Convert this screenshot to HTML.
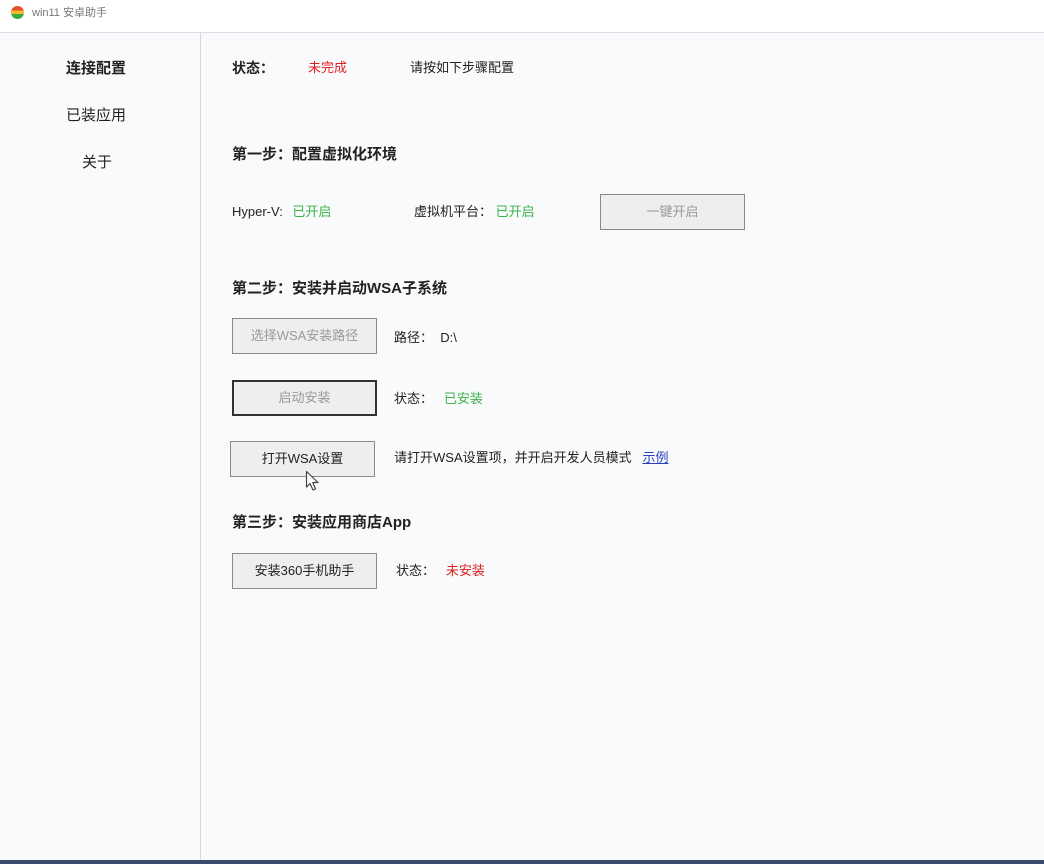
<!DOCTYPE html>
<html><head><meta charset="utf-8"><style>
body{margin:0;width:1044px;height:864px;background:#f9fafc;font-family:"Liberation Sans","Noto Sans CJK SC",sans-serif;font-size:14px;color:#222;position:relative;overflow:hidden}
.a{position:absolute;white-space:nowrap;line-height:16px}
.b{position:absolute;width:143px;height:34px;border:1px solid #8a8a8a;background:#eeeeef;text-align:center;line-height:34px;font-size:13px;color:#222}
.g{color:#3bb54a}.r{color:#e02020}.h{font-weight:bold;font-size:15px}
</style></head><body>
<div style="position:absolute;left:0;top:0;width:1044px;height:32px;background:#fff;border-bottom:1px solid #dcdde0"></div>
<div style="position:absolute;left:11px;top:6px;width:13px;height:13px;border-radius:50%;background:linear-gradient(#e84a2a 0 33%,#f5b82e 33% 60%,#3aa845 60%)"></div>
<div class="a" style="left:32px;top:5px;font-size:11px;color:#777">win11 安卓助手</div>
<div style="position:absolute;left:200px;top:33px;width:1px;height:831px;background:#d6d7da"></div>
<div style="position:absolute;left:0;top:860px;width:1044px;height:4px;background:#3a4a6a"></div>
<div class="a h" style="left:66px;top:61px">连接配置</div>
<div class="a" style="left:66px;top:108px;font-size:15px">已装应用</div>
<div class="a" style="left:82px;top:155px;font-size:15px">关于</div>
<div class="a h" style="left:232px;top:60px;font-size:14px">状态：</div>
<div class="a r" style="left:308px;top:60px;font-size:13px">未完成</div>
<div class="a" style="left:410px;top:60px;font-size:13px">请按如下步骤配置</div>
<div class="a h" style="left:232px;top:147px">第一步：配置虚拟化环境</div>
<div class="a" style="left:232px;top:204px;font-size:13px">Hyper-V: <span class="g" style="margin-left:6px">已开启</span></div>
<div class="a" style="left:414px;top:204px;font-size:13px">虚拟机平台： <span class="g">已开启</span></div>
<div class="b" style="left:600px;top:194px;color:#999">一键开启</div>
<div class="a h" style="left:232px;top:281px">第二步：安装并启动WSA子系统</div>
<div class="b" style="left:232px;top:318px;color:#999">选择WSA安装路径</div>
<div class="a" style="left:394px;top:330px;font-size:13px">路径：&nbsp;&nbsp;D:\</div>
<div class="b" style="left:232px;top:380px;border:2px solid #333;width:141px;height:32px;line-height:32px;color:#999">启动安装</div>
<div class="a" style="left:394px;top:391px;font-size:13px">状态：&nbsp;&nbsp;&nbsp;<span class="g">已安装</span></div>
<div class="b" style="left:230px;top:441px">打开WSA设置</div>
<div class="a" style="left:394px;top:450px;font-size:13px">请打开WSA设置项，并开启开发人员模式&nbsp;&nbsp;&nbsp;<span style="color:#2a3fbf;text-decoration:underline">示例</span></div>
<svg style="position:absolute;left:305px;top:470px" width="16" height="24" viewBox="0 0 16 24"><path d="M1.5 1.5 L1.5 17 L5 13.5 L8 20 L10.5 19 L7.8 12.5 L13 12.5 Z" fill="#fff" stroke="#444" stroke-width="1.2" stroke-linejoin="round"/></svg>
<div class="a h" style="left:232px;top:515px">第三步：安装应用商店App</div>
<div class="b" style="left:232px;top:553px">安装360手机助手</div>
<div class="a" style="left:396px;top:563px;font-size:13px">状态：&nbsp;&nbsp;&nbsp;<span class="r">未安装</span></div>
</body></html>
